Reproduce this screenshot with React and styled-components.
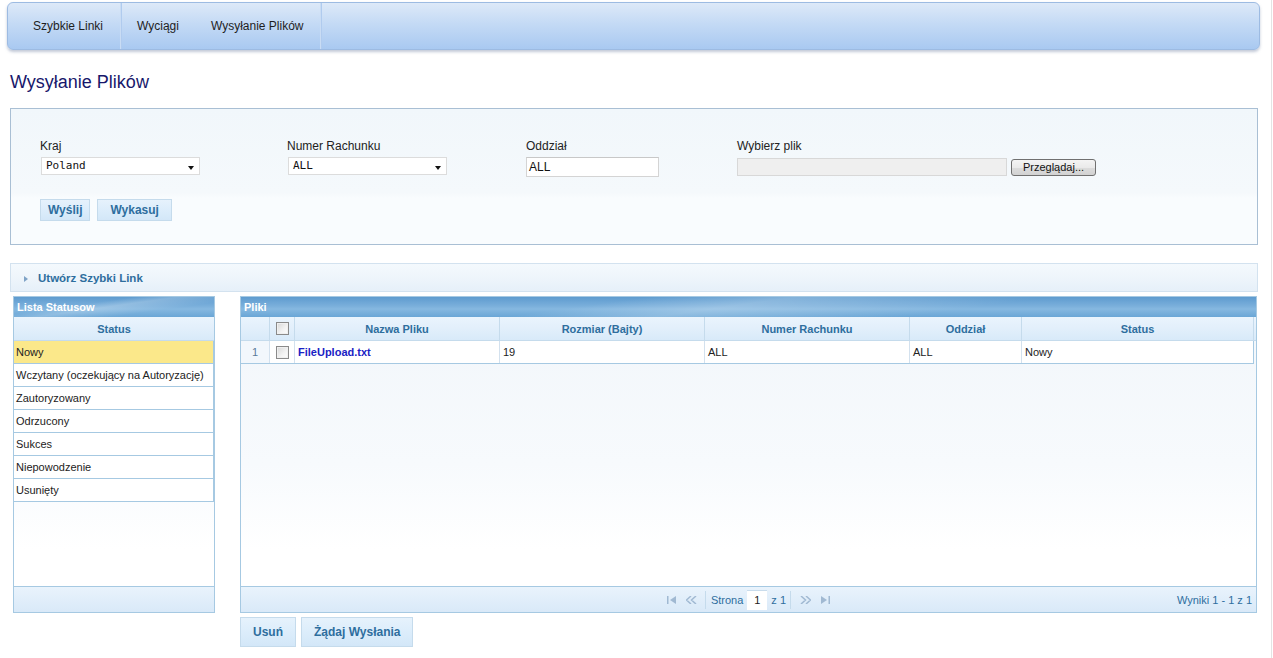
import React from "react";
import styled, { createGlobalStyle } from "styled-components";

const Global = createGlobalStyle`
  html, body { margin: 0; padding: 0; background: #fff; }
  body { font-family: "Liberation Sans", Arial, sans-serif; color: #222; }
  * { box-sizing: border-box; }
`;

const Page = styled.div`
  width: 1272px;
  min-height: 658px;
  border-right: 1px solid #e4e4e4;
  padding-top: 2px;
  overflow: hidden;
`;

const NavBar = styled.nav`
  display: flex;
  align-items: stretch;
  height: 48px;
  margin: 0 11px 0 7px;
  padding-left: 8px;
  border: 1px solid #9dbbe2;
  border-radius: 6px;
  background: linear-gradient(#dde9f8 0%, #c4daf5 45%, #a9c9f1 100%);
  box-shadow: 0 2px 3px rgba(80, 100, 140, 0.35);
`;

const NavItem = styled.a`
  display: flex;
  align-items: center;
  padding: 0 ${(p) => p.$pad || 16}px;
  font-size: 12px;
  color: #1e1e1e;
  text-decoration: none;
  border-right: ${(p) => (p.$divider ? "1px solid #c9dcf4" : "none")};
  box-shadow: ${(p) => (p.$divider ? "1px 0 0 #b0cbee" : "none")};
`;

const Title = styled.h1`
  margin: 21px 0 0 10px;
  font-size: 18px;
  font-weight: normal;
  line-height: 22px;
  color: #17176b;
`;

const FormPanel = styled.section`
  margin: 15px 13px 0 10px;
  height: 137px;
  border: 1px solid #a9bfd4;
  background: linear-gradient(#f1f7fb 0%, #f5f9fc 62%, #f9fcfe 66%, #f9fcfe 100%);
  padding: 30px 0 0 29px;
`;

const FieldsRow = styled.div`
  display: grid;
  grid-template-columns: 247px 239px 211px 1fr;
  height: 38px;
`;

const Field = styled.div`
  display: flex;
  flex-direction: column;
`;

const Label = styled.label`
  font-size: 12px;
  line-height: 14px;
  color: #222;
  margin-bottom: 3px;
`;

const FakeSelect = styled.div`
  position: relative;
  width: 159px;
  height: 18px;
  margin: 1px 0 0 1px;
  background: #fff;
  border: 1px solid #dcdcdc;
  font-family: "DejaVu Sans Mono", "Liberation Mono", monospace;
  font-size: 11px;
  line-height: 16px;
  padding-left: 4px;
  color: #111;
  &::after {
    content: "";
    position: absolute;
    right: 5px;
    top: 8px;
    border-left: 3.5px solid transparent;
    border-right: 3.5px solid transparent;
    border-top: 4px solid #111;
  }
`;

const TextInput = styled.div`
  width: 133px;
  height: 20px;
  margin-top: 1px;
  background: #fff;
  border: 1px solid #d4d4d4;
  border-top-color: #c8c8c8;
  font-size: 12px;
  line-height: 19px;
  padding-left: 2px;
  color: #111;
`;

const FileRow = styled.div`
  display: flex;
  align-items: center;
  gap: 4px;
  margin-top: 2px;
`;

const FileText = styled.div`
  width: 270px;
  height: 18px;
  background: #efefef;
  border: 1px solid #d8d8d8;
`;

const BrowseButton = styled.div`
  width: 85px;
  height: 17px;
  border: 1px solid #707070;
  border-radius: 3px;
  background: linear-gradient(#f4f4f4 0%, #eaeaea 50%, #dcdcdc 51%, #d2d2d2 100%);
  font-size: 11px;
  line-height: 15px;
  text-align: center;
  color: #111;
`;

const ButtonsRow = styled.div`
  display: flex;
  gap: ${(p) => p.$gap || 6}px;
  margin-top: ${(p) => p.$top || 0}px;
`;

const UiButton = styled.button`
  height: ${(p) => p.$h || 22}px;
  padding: 0 ${(p) => p.$px || 6}px;
  border: 1px solid #c5dbec;
  background: linear-gradient(#e6f2fc 0%, #dcedfb 50%, #d3e7f8 100%);
  color: #2e6e9e;
  font-family: "Liberation Sans", Arial, sans-serif;
  font-weight: bold;
  font-size: 12px;
  cursor: pointer;
`;

const Accordion = styled.div`
  display: flex;
  align-items: center;
  height: 29px;
  margin: 18px 13px 0 10px;
  padding-left: 13px;
  border: 1px solid #d3e2ef;
  background: linear-gradient(#f4f9fd 0%, #eef5fb 50%, #e6f0f9 100%);
  color: #2e6e9e;
  font-weight: bold;
  font-size: 11.5px;
`;

const Caret = styled.span`
  width: 0;
  height: 0;
  margin-right: 10px;
  margin-top: 2px;
  border-top: 3px solid transparent;
  border-bottom: 3px solid transparent;
  border-left: 4px solid #7fa3c6;
`;

const GridsRow = styled.div`
  display: flex;
  gap: 25px;
  margin: 4px 0 0 13px;
  align-items: flex-start;
`;

const Column = styled.div`
  display: flex;
  flex-direction: column;
`;

const Grid = styled.div`
  display: flex;
  flex-direction: column;
  width: ${(p) => p.$w}px;
  height: 317px;
  border: 1px solid #a6c9e2;
  background: #fff;
`;

const Caption = styled.div`
  height: 20px;
  padding-left: 3px;
  display: flex;
  align-items: center;
  color: #fff;
  font-weight: bold;
  font-size: 11px;
  background:
    linear-gradient(172deg, rgba(255,255,255,0) 35%, rgba(255,255,255,0.22) 48%, rgba(255,255,255,0) 70%),
    linear-gradient(#5e9bcf 0%, #7aafdb 45%, #86b8e0 60%, #6aa6d6 100%);
`;

const HeadRow = styled.div`
  display: grid;
  grid-template-columns: ${(p) => p.$cols};
  height: 24px;
  border-bottom: 1px solid #c5dbec;
  background: linear-gradient(#eaf4fd 0%, #e2effb 50%, #d8eaf9 100%);
`;

const HeadCell = styled.div`
  display: flex;
  align-items: center;
  justify-content: center;
  color: #2e6e9e;
  font-weight: bold;
  font-size: 11px;
  border-right: ${(p) => (p.$last ? "none" : "1px solid #c5dbec")};
`;

const Body = styled.div`
  flex: 1;
  background: linear-gradient(#f3f7fb 0%, #f7fafd 50%, #ffffff 85%);
`;

const StatusRow = styled.div`
  height: 23px;
  display: flex;
  align-items: center;
  padding-left: 2px;
  font-size: 11px;
  color: #222;
  border-bottom: 1px solid #a6c9e2;
  border-right: 1px solid #a6c9e2;
  background: ${(p) => (p.$active ? "#fbe88a" : "#fff")};
`;

const DataRow = styled.div`
  display: grid;
  grid-template-columns: ${(p) => p.$cols};
  height: 23px;
  background: #fff;
  border-bottom: 1px solid #a6c9e2;
  width: max-content;
`;

const Cell = styled.div`
  display: flex;
  align-items: center;
  justify-content: ${(p) => (p.$center ? "center" : "flex-start")};
  padding-left: ${(p) => (p.$center ? 0 : 3)}px;
  font-size: 11px;
  color: ${(p) => (p.$muted ? "#5a7a99" : "#222")};
  background: ${(p) => (p.$num ? "#f2f7fc" : "transparent")};
  border-right: 1px solid ${(p) => (p.$last ? "#a6c9e2" : "#d3e1ee")};
`;

const FileLink = styled.a`
  color: #1a22c4;
  font-weight: bold;
  text-decoration: none;
`;

const CheckBox = styled.span`
  width: 13px;
  height: 13px;
  border: 1px solid #8a8a8a;
  background: linear-gradient(135deg, #d7d7d7 0%, #f3f3f3 60%, #fdfdfd 100%);
  box-shadow: inset 0 0 0 1px #f0f0f0;
`;

const Footer = styled.div`
  height: 26px;
  border-top: 1px solid #a6c9e2;
  background: linear-gradient(#e9f3fc 0%, #e1eefa 50%, #d9e9f8 100%);
  display: grid;
  grid-template-columns: 1fr auto 1fr;
  align-items: center;
  font-size: 11px;
  color: #2e6e9e;
`;

const Pager = styled.div`
  display: flex;
  align-items: center;
  grid-column: 2;
`;

const PagerIcon = styled.span`
  display: flex;
  align-items: center;
  justify-content: center;
  width: 19px;
  height: 18px;
  opacity: 0.55;
`;

const PagerSep = styled.span`
  width: 1px;
  height: 18px;
  background: #c5dbec;
  margin: 0 5px 0 4px;
`;

const PageInput = styled.span`
  width: 20px;
  height: 20px;
  margin: 0 4px;
  background: #fff;
  border-top: 1px solid #c9dcec;
  display: flex;
  align-items: center;
  justify-content: center;
  color: #222;
`;

const Results = styled.span`
  justify-self: end;
  padding-right: 4px;
`;

const FilesCols = "29px 25px 205px 205px 205px 112px 232px";

const IconFirst = () => (
  <svg width="10" height="8" viewBox="0 0 10 8">
    <rect x="0" y="0" width="1.5" height="8" fill="#6d8fb3" />
    <path d="M9 0 L3 4 L9 8 Z" fill="#6d8fb3" />
  </svg>
);
const IconPrev = () => (
  <svg width="11" height="8" viewBox="0 0 11 8">
    <path d="M5 0 L0.5 4 L5 8 M10 0 L5.5 4 L10 8" fill="none" stroke="#6d8fb3" strokeWidth="1.5" />
  </svg>
);
const IconNext = () => (
  <svg width="11" height="8" viewBox="0 0 11 8">
    <path d="M1 0 L5.5 4 L1 8 M6 0 L10.5 4 L6 8" fill="none" stroke="#6d8fb3" strokeWidth="1.5" />
  </svg>
);
const IconLast = () => (
  <svg width="10" height="8" viewBox="0 0 10 8">
    <path d="M1 0 L7 4 L1 8 Z" fill="#6d8fb3" />
    <rect x="8.5" y="0" width="1.5" height="8" fill="#6d8fb3" />
  </svg>
);

const statuses = [
  "Nowy",
  "Wczytany (oczekujący na Autoryzację)",
  "Zautoryzowany",
  "Odrzucony",
  "Sukces",
  "Niepowodzenie",
  "Usunięty",
];

export default function App() {
  return (
    <>
      <Global />
      <Page>
        <NavBar>
          <NavItem $divider $pad={17}>Szybkie Linki</NavItem>
          <NavItem>Wyciągi</NavItem>
          <NavItem $divider $pad={16}>Wysyłanie Plików</NavItem>
        </NavBar>

        <Title>Wysyłanie Plików</Title>

        <FormPanel>
          <FieldsRow>
            <Field>
              <Label>Kraj</Label>
              <FakeSelect>Poland</FakeSelect>
            </Field>
            <Field>
              <Label>Numer Rachunku</Label>
              <FakeSelect>ALL</FakeSelect>
            </Field>
            <Field>
              <Label>Oddział</Label>
              <TextInput>ALL</TextInput>
            </Field>
            <Field>
              <Label>Wybierz plik</Label>
              <FileRow>
                <FileText />
                <BrowseButton>Przeglądaj...</BrowseButton>
              </FileRow>
            </Field>
          </FieldsRow>
          <ButtonsRow $top={22} $gap={7}>
            <UiButton $px={7}>Wyślij</UiButton>
            <UiButton $px={12}>Wykasuj</UiButton>
          </ButtonsRow>
        </FormPanel>

        <Accordion>
          <Caret />
          Utwórz Szybki Link
        </Accordion>

        <GridsRow>
          <Grid $w={202}>
            <Caption>Lista Statusow</Caption>
            <HeadRow $cols="1fr">
              <HeadCell $last>Status</HeadCell>
            </HeadRow>
            <Body>
              {statuses.map((s, i) => (
                <StatusRow key={s} $active={i === 0}>
                  {s}
                </StatusRow>
              ))}
            </Body>
            <Footer />
          </Grid>

          <Column>
            <Grid $w={1017}>
              <Caption>Pliki</Caption>
              <HeadRow $cols={FilesCols + " 1fr"}>
                <HeadCell />
                <HeadCell>
                  <CheckBox />
                </HeadCell>
                <HeadCell>Nazwa Pliku</HeadCell>
                <HeadCell>Rozmiar (Bajty)</HeadCell>
                <HeadCell>Numer Rachunku</HeadCell>
                <HeadCell>Oddział</HeadCell>
                <HeadCell>Status</HeadCell>
                <HeadCell $last />
              </HeadRow>
              <Body>
                <DataRow $cols={FilesCols}>
                  <Cell $center $muted $num>1</Cell>
                  <Cell $center>
                    <CheckBox />
                  </Cell>
                  <Cell>
                    <FileLink>FileUpload.txt</FileLink>
                  </Cell>
                  <Cell>19</Cell>
                  <Cell>ALL</Cell>
                  <Cell>ALL</Cell>
                  <Cell $last>Nowy</Cell>
                </DataRow>
              </Body>
              <Footer>
                <Pager>
                  <PagerIcon><IconFirst /></PagerIcon>
                  <PagerIcon><IconPrev /></PagerIcon>
                  <PagerSep />
                  <span>Strona</span>
                  <PageInput>1</PageInput>
                  <span>z 1</span>
                  <PagerSep />
                  <PagerIcon><IconNext /></PagerIcon>
                  <PagerIcon><IconLast /></PagerIcon>
                </Pager>
                <Results>Wyniki 1 - 1 z 1</Results>
              </Footer>
            </Grid>
            <ButtonsRow $top={4} $gap={5}>
              <UiButton $h={30} $px={12}>Usuń</UiButton>
              <UiButton $h={30} $px={12}>Żądaj Wysłania</UiButton>
            </ButtonsRow>
          </Column>
        </GridsRow>
      </Page>
    </>
  );
}
